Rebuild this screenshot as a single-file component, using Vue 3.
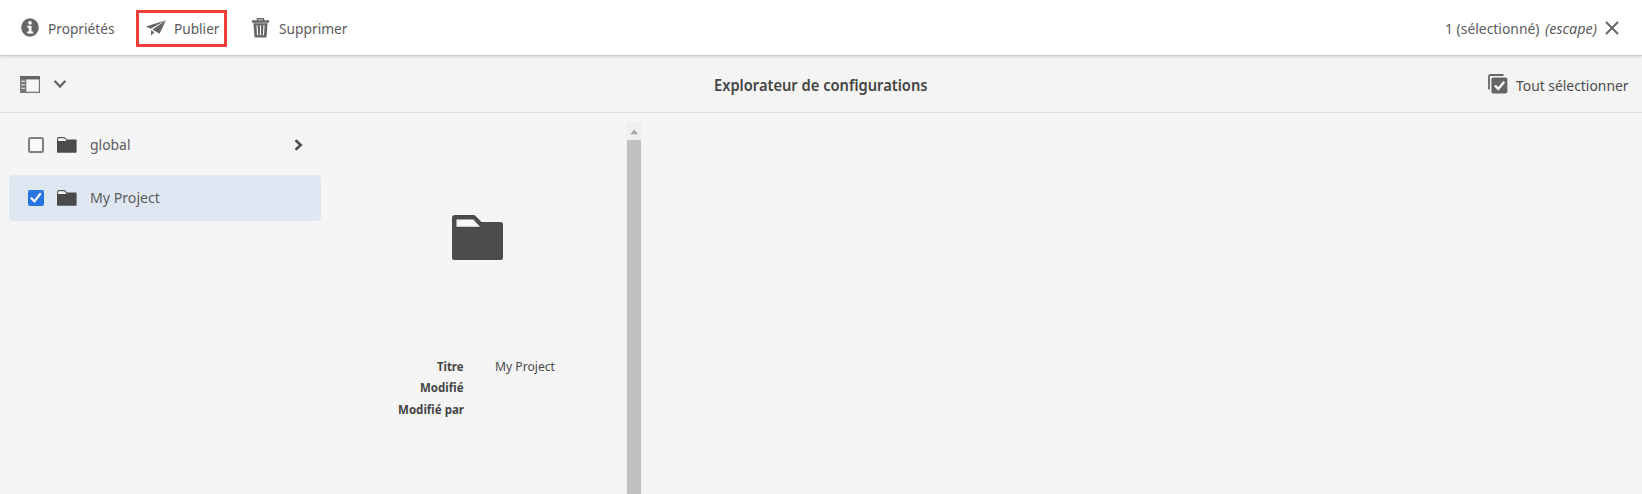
<script setup>
import { h } from 'vue'

// Single-line label set to a fixed measure.
const Label = (props) =>
  h('svg', { width: props.w, height: 24, class: 'label' }, [
    h('text', { x: 0, y: 17, textLength: props.w, lengthAdjust: 'spacingAndGlyphs' }, props.text),
  ])
Label.props = ['text', 'w']

const rows = [
  { name: 'global', w: 40.5, checked: false, children: true },
  { name: 'My Project', w: 70, checked: true, children: false },
]
const details = [
  { key: 'Titre', kw: 26.5, value: 'My Project', vw: 60 },
  { key: 'Modifié', kw: 43.5 },
  { key: 'Modifié par', kw: 66 },
]
</script>

<template>
  <div class="page">
    <header class="actions">
      <button class="action info">
        <svg width="18" height="19" viewBox="0 0 18 19">
          <ellipse cx="9" cy="9.5" rx="8.8" ry="9.3" fill="#666" />
          <circle cx="9" cy="4.9" r="1.8" fill="#fff" />
          <path d="M6.2 7.7h4.3v5.8h1.6v1.9H6.2v-1.9h1.6V9.6H6.2z" fill="#fff" />
        </svg>
        <Label text="Propriétés" :w="66.5" />
      </button>
      <button class="action publish">
        <svg width="20" height="16" viewBox="0 0 20 16">
          <path d="M0 6.4 19.7.2 4.8 8.7zM19.8.5 6.3 9.6l7.3 4.1zM5 10.3l3.5 2L5 15.5z" fill="#666" />
        </svg>
        <Label text="Publier" :w="45.5" />
      </button>
      <button class="action remove">
        <svg width="17" height="20" viewBox="0 0 17 20">
          <path d="M5.5 2.8V.8h6v2" fill="none" stroke="#666" stroke-width="1.4" />
          <path d="M0 2.3h17v2.4H0zM1.4 5.2h14.2l-1.1 14.3h-12z" fill="#666" />
          <path d="M5 7.3l.6 10M8.5 7.3v10M12 7.3l-.6 10" stroke="#fff" stroke-width="1.1" />
        </svg>
        <Label text="Supprimer" :w="68.5" />
      </button>
      <div class="selection">
        <Label text="1 (sélectionné)" :w="94.5" />
        <em><Label text="(escape)" :w="52" /></em>
        <svg class="close" width="14" height="14" viewBox="0 0 14 14">
          <path d="M1 1l12 12M13 1L1 13" stroke="#666" stroke-width="2" />
        </svg>
      </div>
    </header>

    <div class="titlebar">
      <div class="rail">
        <svg width="20" height="17" viewBox="0 0 20 17">
          <path d="M0 0h20v17H0z" fill="#777" />
          <path d="M0 0h20v3H0z" fill="#666" />
          <path d="M6.3 3.5h12.5v12.2H6.3z" fill="#f8f8f8" />
          <path d="M1.3 5.2h3.6M1.3 8.7h3.6M1.3 12.2h3.6" stroke="#f4f4f4" stroke-width="1.1" />
        </svg>
        <svg width="12" height="9" viewBox="0 0 12 9">
          <path d="M1.2 1.5L6 6.5l4.8-5" fill="none" stroke="#666" stroke-width="2.4" stroke-linecap="round" />
        </svg>
      </div>
      <h1><Label text="Explorateur de configurations" :w="213.5" /></h1>
      <div class="all">
        <svg width="20" height="20" viewBox="0 0 20 20">
          <path d="M1 15.5V2.5Q1 1 2.5 1H15.5" fill="none" stroke="#666" stroke-width="1.8" />
          <rect x="3.4" y="3.4" width="16" height="16" rx="1.8" fill="#666" />
          <path d="M7 11.5l3.2 3.4 6-7.2" fill="none" stroke="#fff" stroke-width="2.3" />
        </svg>
        <Label text="Tout sélectionner" :w="112.5" />
      </div>
    </div>

    <main>
      <section class="tree">
        <div v-for="row in rows" :key="row.name" class="row" :class="{ selected: row.checked }">
          <span class="check">
            <svg v-if="row.checked" width="12" height="12" viewBox="0 0 12 12">
              <path d="M1.5 6.3l3 3.1 5.6-7.4" fill="none" stroke="#fff" stroke-width="2.2" stroke-linecap="round" stroke-linejoin="round" />
            </svg>
          </span>
          <svg class="folder" width="20" height="16" viewBox="0 0 20 16">
            <path d="M.6 5V1.6Q.6.6 1.6.6H7.500L10 3.300" fill="#f8f8f8" stroke="#555" stroke-width="1.100" />
            <path d="M0 4h8.800L10 2.500h9q.6 0 .6.600V15q0 .7-.7.7H.7Q0 15.700 0 15z" fill="#4b4b4b" />
          </svg>
          <Label :text="row.name" :w="row.w" />
          <svg v-if="row.children" class="next" width="9" height="12" viewBox="0 0 9 12">
            <path d="M1.5 1.2L6.8 6l-5.300 4.800" fill="none" stroke="#4b4b4b" stroke-width="2.500" />
          </svg>
        </div>
      </section>
      <section class="preview">
        <svg class="thumb" width="51" height="45" viewBox="0 0 51 45">
          <path d="M3 0H21.500Q23 0 24.200 1.400L29.500 7H48.500Q51 7 51 9V42.500Q51 45 49 45H2Q0 45 0 43V3Q0 0 3 0z" fill="#4b4b4b" />
          <path d="M4.500 4.500H21.300L28 11.800H4.500z" fill="#f8f8f8" />
        </svg>
        <dl>
          <template v-for="d in details" :key="d.key">
            <dt><Label :text="d.key" :w="d.kw" /></dt>
            <dd><Label v-if="d.value" :text="d.value" :w="d.vw" /></dd>
          </template>
        </dl>
      </section>
      <div class="scrollbar">
        <svg width="16" height="18" viewBox="0 0 16 18">
          <path d="M4.200 12.300L8.200 7.800l4 4.500z" fill="#a2a2a2" />
        </svg>
        <div class="bar"></div>
      </div>
    </main>
  </div>
</template>

<style>
body { background: #f5f5f5; }
.label { display: block; flex: none; overflow: visible; fill: currentColor; }
</style>

<style scoped>
.page { height: 494px; display: flex; flex-direction: column; overflow: hidden; background: #f5f5f5; color: #5c5c5c; font: 14.500px "Noto Sans", "Open Sans", sans-serif; }
svg { display: block; flex: none; }
.actions { height: 55px; flex: none; box-sizing: border-box; display: flex; align-items: center; background: #fff; box-shadow: 0 1px 1px #c9c9c9, 0 2px 3px #ddd; padding: 0 23px 0 21px; z-index: 1; }
.action { font: inherit; color: inherit; background: none; border: 0; padding: 0; display: flex; align-items: center; }
.action .label { margin-top: 3px; }
.info { gap: 8.500px; }
.publish { width: 91px; height: 37px; margin: 2px 0 0 22px; box-sizing: border-box; border: 3px solid #ed3e38; padding-left: 7px; gap: 8px; }
.publish .label { margin-top: 0; }
.publish svg:first-child { margin-top: -2px; }
.remove { margin-left: 25px; gap: 10px; }
.selection { margin-left: auto; display: flex; align-items: center; gap: 6px; }
.selection .label { margin-top: 3px; }
.selection em { font-style: italic; }
.close { margin-left: 2px; }
.titlebar { height: 58px; flex: none; box-sizing: border-box; border-bottom: 1px solid #dfdfdf; background: #f4f4f4; display: grid; grid-template-columns: 1fr auto 1fr; align-items: center; padding: 2px 14px 0 20px; }
.rail { display: flex; align-items: center; gap: 14px; margin-top: -1px; }
h1 { margin: 3px 0 0 -7px; font-size: 15.500px; font-weight: 600; color: #444; }
.all { display: flex; justify-content: flex-end; align-items: center; gap: 8px; margin-top: -1px; color: #4b4b4b; }
.all .label { margin-top: 3px; }
main { flex: 1; min-height: 0; display: flex; }
.tree { width: 312px; flex: none; padding: 9px 0 0 9px; display: flex; flex-direction: column; gap: 8px; }
.row { height: 45px; display: flex; align-items: center; padding: 0 18px 0 19px; border-radius: 4px; }
.row.selected { height: 46px; background: #dfe7f2; }
.check { width: 16px; height: 16px; box-sizing: border-box; border: 2px solid #808080; border-radius: 2px; background: #fafafa; display: grid; place-items: center; }
.selected .check { border-color: #2874e0; background: #2874e0; }
.folder { margin: 0 12.500px 0 13px; }
.row .label { margin-top: 0; }
.next { margin-left: auto; }
.preview { width: 305px; flex: none; padding-top: 102px; }
.thumb { margin-left: 131px; }
dl { margin: 94px 0 0; display: grid; grid-template-columns: 142.500px auto; column-gap: 31px; grid-auto-rows: 21.300px; font-size: 12.500px; }
dt { display: flex; justify-content: flex-end; font-weight: 700; color: #444; }
dd { margin: 0; color: #4b4b4b; }
.scrollbar { margin-top: 9px; width: 16px; display: flex; flex-direction: column; background: #f0f0f0; }
.bar { flex: 1; margin: 0 1px; background: #c1c1c1; }
</style>
